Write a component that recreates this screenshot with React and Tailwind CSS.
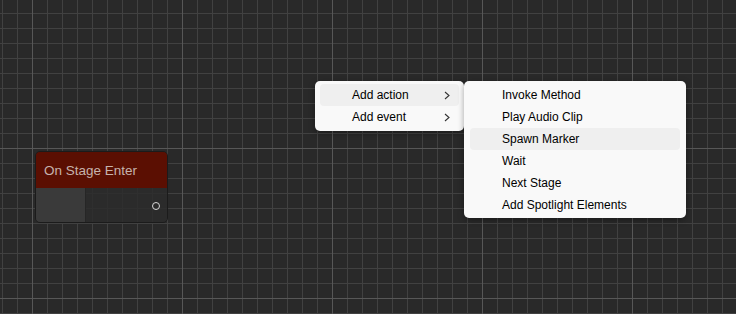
export default function App() {
  const sub = ["Invoke Method", "Play Audio Clip", "Spawn Marker", "Wait", "Next Stage", "Add Spotlight Elements"];
  const Chevron = () => (
    <svg width="6" height="9" viewBox="0 0 6 9" className="shrink-0">
      <polyline points="1,1 5,4.5 1,8" fill="none" stroke="#333" strokeWidth="1.1" />
    </svg>
  );
  return (
    <div
      className="relative w-[736px] h-[314px] overflow-hidden bg-[#292929] [background-image:linear-gradient(to_right,#575757_1px,transparent_1px),linear-gradient(to_bottom,#575757_1px,transparent_1px),linear-gradient(to_right,#414141_1px,transparent_1px),linear-gradient(to_bottom,#414141_1px,transparent_1px)] [background-size:150px_150px,150px_150px,15px_15px,15px_15px] [background-position:32px_0,0_148px,2px_0,0_13px]"
      style={{ fontFamily: '"Liberation Sans", Arial, sans-serif' }}
    >
      {/* Node */}
      <div className="absolute left-[35px] top-[151px] w-[133px] h-[72px] rounded-[5px] border border-[#1b1b1b] overflow-hidden flex flex-col">
        <div className="h-[36px] bg-[#5b0f02] flex items-center pl-[8px] pt-[3px] text-[13.5px] text-[#c6b3ad]">
          On Stage Enter
        </div>
        <div className="flex-1 flex">
          <div className="w-[50px] bg-[#3a3a3a] border-r border-[#262626]" />
          <div className="flex-1 bg-[rgba(44,44,44,0.82)] flex items-center justify-end pr-[7px] pt-[2px]">
            <div className="w-[8px] h-[8px] rounded-full border-[1.5px] border-[#d8d8d8]" />
          </div>
        </div>
      </div>

      {/* Menu 1 */}
      <div className="absolute left-[315px] top-[81px] w-[149px] h-[50px] rounded-[5px] bg-[#f9f9f9] shadow-[0_2px_6px_rgba(0,0,0,0.35)] py-[3px] px-[5px] flex flex-col text-[12px] text-[#000]">
        <div className="h-[22px] rounded-[4px] bg-[#efefef] flex items-center pl-[32px] pr-[9px] justify-between">
          <span>Add action</span>
          <Chevron />
        </div>
        <div className="h-[22px] flex items-center pl-[32px] pr-[9px] justify-between">
          <span>Add event</span>
          <Chevron />
        </div>
      </div>

      {/* Menu 2 */}
      <div className="absolute left-[464px] top-[81px] w-[222px] h-[137px] rounded-[5px] bg-[#f9f9f9] shadow-[0_2px_6px_rgba(0,0,0,0.35)] py-[3px] px-[6px] flex flex-col text-[12px] text-[#000]">
        {sub.map((s, i) => (
          <div
            key={s}
            className={
              "h-[22px] shrink-0 rounded-[4px] flex items-center pl-[32px] " + (i === 2 ? "bg-[#efefef]" : "")
            }
          >
            {s}
          </div>
        ))}
      </div>
    </div>
  );
}
